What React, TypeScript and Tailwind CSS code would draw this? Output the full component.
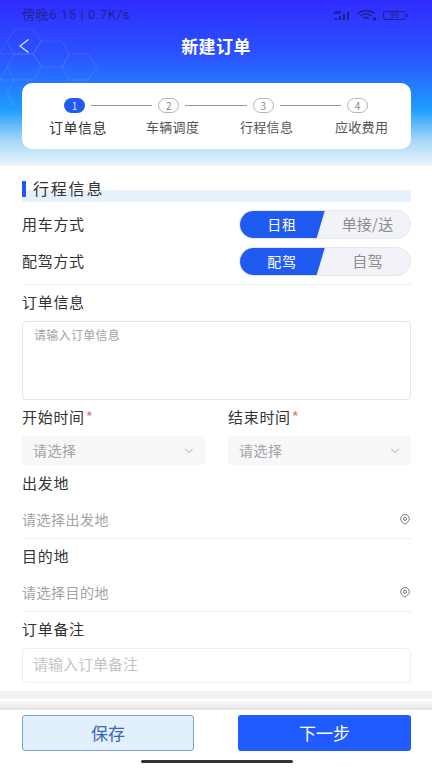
import { ChevronDown } from 'lucide-react';

const STEPS = ['订单信息', '车辆调度', '行程信息', '应收费用'];

function Hexagons() {
    const hexes = [
        'M16 29 L33 29 L41 41 L33 54 L14 54 L7 41 Z',
        'M14 54 L33 54 L42 67 L33 80 L14 80 L7 67 Z',
        'M41 41 L62 41 L69 54 L62 67 L42 67 L33 54 Z',
        'M69 54 L88 54 L97 67 L88 80 L69 80 L62 67 Z',
        'M7 41 L0 54 L14 54',
        'M7 67 L0 80 L14 80 L7 93 L14 106',
    ];
    return (
        <svg className="absolute left-0 top-0" width="110" height="120" viewBox="0 0 110 120" fill="none">
            {hexes.map((d) => (
                <path key={d} d={d} stroke="#ffffff" strokeOpacity="0.1" strokeWidth="1" />
            ))}
        </svg>
    );
}

function StatusIcons() {
    return (
        <div className="flex items-center gap-[3px]">
            <svg width="20" height="11" viewBox="0 0 20 11" fill="#1f1f85">
                <rect x="1" y="8" width="2" height="2" />
                <rect x="5" y="6" width="2" height="4" />
                <rect x="9" y="4" width="2" height="6" />
                <rect x="13" y="2" width="2" height="8" />
                <rect x="0" y="1" width="7" height="3" opacity="0.75" />
            </svg>
            <svg width="20" height="12" viewBox="0 0 20 12" fill="none" stroke="#1f1f85" strokeWidth="1.5">
                <path d="M1 4.5 C5.5 0.5 12.5 0.5 17 4.5" />
                <path d="M3.5 7 C6.8 4.2 11.2 4.2 14.5 7" />
                <path d="M6.3 9.5 C8 8.2 10 8.2 11.7 9.5" />
                <circle cx="17.5" cy="10" r="0.9" />
            </svg>
            <div className="ml-[3px] flex items-center">
                <div className="flex h-[9px] w-[23px] items-center justify-center rounded-[3px] border border-[#1f1f85] text-[8px] leading-none text-[#1f1f85]">99</div>
                <div className="ml-[1px] h-[3px] w-[1px] bg-[#1f1f85]" />
            </div>
        </div>
    );
}

function Stepper() {
    return (
        <div className="ml-[22px] mr-[21px] h-[66px] rounded-[10px] bg-white pt-[15px]">
            <div className="flex items-center pl-[42px] pr-[43px]">
                {[1, 2, 3, 4].map((n) => (
                    <div key={n} className={`flex items-center ${n < 4 ? 'flex-1' : ''}`}>
                        <div className={`flex h-[15px] w-[21px] items-center justify-center rounded-full text-[10px] leading-none ${n === 1 ? 'bg-[#1f5bf0] text-[#dbe6ff]' : 'border border-[#b5b5b5] text-[#8a8a8a]'}`}>
                            {n}
                        </div>
                        {n < 4 && <div className="mx-[6px] h-px flex-1 bg-[#9a9a9a]" />}
                    </div>
                ))}
            </div>
            <div className="mt-[5px] grid grid-cols-[97px_94px_95px_auto] pl-[27px]">
                {STEPS.map((s, i) => (
                    <span key={s} className={i === 0 ? 'text-[14px] leading-[18px] tracking-[0.5px] text-[#333333]' : 'text-[13px] leading-[18px] tracking-[0.3px] text-[#555555]'}>
                        {s}
                    </span>
                ))}
            </div>
        </div>
    );
}

function Toggle({ on, off }: { on: string; off: string }) {
    return (
        <div className="flex h-[29px] w-[172px] overflow-hidden rounded-full border border-[#e6e8ee] bg-[#f1f3f8]">
            <div className="-my-px -ml-px flex h-[29px] w-[86px] items-center justify-center bg-[#1f5bf0] text-[14px] tracking-[0.8px] text-white [clip-path:polygon(0_0,100%_0,90%_100%,0_100%)]">
                {on}
            </div>
            <div className="flex flex-1 items-center justify-center text-[15px] tracking-[0.2px] text-[#8d8d8d]">{off}</div>
        </div>
    );
}

function Label({ children, required, className }: { children: string; required?: boolean; className?: string }) {
    return (
        <div className={`flex h-[20px] items-center text-[15px] leading-[20px] tracking-[0.7px] text-[#333333] ${className ?? ''}`}>
            <span className="-mt-[2px]">{children}</span>
            {required && <span className="ml-[1px] -mt-[2px] text-[#e57373]">*</span>}
        </div>
    );
}

function SelectBox() {
    return (
        <div className="flex h-[29px] items-center justify-between rounded-[4px] bg-[#f6f7f9] pl-[11px] pr-[9px] text-[14px] tracking-[0.5px] text-[#a3a3a3]">
            请选择
            <ChevronDown className="h-[14px] w-[14px] text-[#808080]" strokeWidth={1.1} />
        </div>
    );
}

function PlaceRow({ text }: { text: string }) {
    return (
        <div className="mt-[9px] flex h-[36px] items-center justify-between border-b border-[#eeeff2] pb-[2px] pr-[1px] text-[14px] tracking-[0.5px] text-[#a3a3a3]">
            {text}
            <svg width="10" height="11" viewBox="0 0 10 11" fill="none" stroke="#666666" strokeWidth="0.9">
                <path d="M5 10.2 C3 8.8 0.7 7 0.7 4.8 A4.3 4.3 0 0 1 9.3 4.8 C9.3 7 7 8.8 5 10.2 Z" />
                <circle cx="5" cy="4.8" r="1.6" />
            </svg>
        </div>
    );
}

export default function App() {
    return (
        <div className="relative flex h-[768px] w-[432px] flex-col overflow-hidden bg-white font-['Noto_Sans_CJK_SC','Noto_Sans',sans-serif]">
            {/* 顶部 */}
            <div className="relative h-[166px] shrink-0 bg-[linear-gradient(180deg,#2f2bff_0%,#2a55ff_35%,#1f9dff_66%,#a9d8f8_85%,#ebf5fc_100%)]">
                <Hexagons />
                <div className="relative flex h-[30px] items-center justify-between pl-[22px] pr-[24px]">
                    <span className="font-['Roboto','Noto_Sans_CJK_SC',sans-serif] text-[13px] tracking-[0.6px] text-[#23238f]">
                        傍晚6:15 | 0.7K/s
                    </span>
                    <StatusIcons />
                </div>
                <div className="relative flex h-[32px] items-center justify-center">
                    <svg className="absolute left-[19px] top-[9px]" width="10" height="14" viewBox="0 0 10 14" fill="none" stroke="#e3ebff" strokeWidth="1.2">
                        <path d="M9.5 0.5 L1 7 L9.5 13.5" />
                    </svg>
                    <span className="-mt-[1px] text-[17px] font-bold tracking-[0.4px] text-white">新建订单</span>
                </div>
                <div className="relative mt-[21px]">
                    <Stepper />
                </div>
            </div>

            {/* 表单 */}
            <div className="flex-1 pl-[22px] pr-[21px] pt-[14px]">
                <div className="relative h-[22px]">
                    <div className="absolute bottom-0 left-0 right-0 h-[12px] bg-[#e6f1fd]" />
                    <div className="relative flex items-center gap-[7px]">
                        <div className="h-[16px] w-[4px] bg-[#1f5bf0]" />
                        <span className="-mt-[1px] text-[16px] leading-[18px] tracking-[1.8px] text-[#333333]">行程信息</span>
                    </div>
                </div>
                <div className="mt-[8px] flex items-center justify-between">
                    <Label>用车方式</Label>
                    <Toggle on="日租" off="单接/送" />
                </div>
                <div className="mt-[8px] flex items-center justify-between border-b border-[#eeeff2] pb-[8px]">
                    <Label>配驾方式</Label>
                    <Toggle on="配驾" off="自驾" />
                </div>
                <Label className="mt-[8px]">订单信息</Label>
                <div className="mt-[8px] h-[79px] rounded-[4px] border border-[#e4e5e8] px-[11px] py-[5px] text-[12px] leading-[16px] tracking-[0.3px] text-[#a3a3a3]">
                    请输入订单信息
                </div>
                <div className="mt-[8px] grid grid-cols-2 gap-x-[23px]">
                    <div>
                        <Label required>开始时间</Label>
                        <div className="mt-[8px]"><SelectBox /></div>
                    </div>
                    <div>
                        <Label required>结束时间</Label>
                        <div className="mt-[8px]"><SelectBox /></div>
                    </div>
                </div>
                <Label className="mt-[9px]">出发地</Label>
                <PlaceRow text="请选择出发地" />
                <Label className="mt-[8px]">目的地</Label>
                <PlaceRow text="请选择目的地" />
                <Label className="mt-[8px]">订单备注</Label>
                <div className="mt-[8px] flex h-[35px] items-center rounded-[4px] border border-[#eeeff2] px-[10px] pb-[2px] text-[15px] text-[#c4c4c4]">
                    请输入订单备注
                </div>
            </div>

            {/* 底部 */}
            <div className="h-[8px] shrink-0 bg-[#f1f2f6]" />
            <div className="h-[11px] shrink-0 bg-[linear-gradient(180deg,#ffffff_0%,#e4e4e6_100%)]" />
            <div className="flex h-[58px] shrink-0 flex-col bg-white pl-[22px] pr-[21px] pt-[5px]">
                <div className="flex justify-between">
                    <button type="button" className="h-[36px] w-[172px] rounded-[3px] border border-[#7d9fd3] bg-[#e2effd] text-[17px] text-[#3a66b5]">
                        保存
                    </button>
                    <button type="button" className="h-[36px] w-[173px] rounded-[3px] bg-[#1f5bff] text-[17px] text-white">
                        下一步
                    </button>
                </div>
                <div className="mx-auto mt-[9px] h-[3px] w-[152px] rounded-full bg-[#333333]" />
            </div>
        </div>
    );
}
